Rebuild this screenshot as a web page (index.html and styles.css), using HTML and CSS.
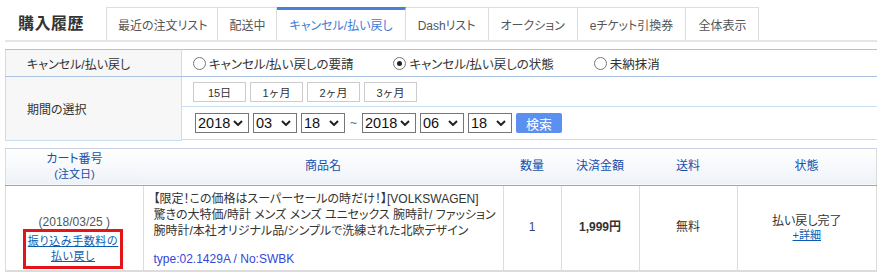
FILE: index.html
```html
<!DOCTYPE html>
<html>
<head>
	<meta charset="utf-8">
	<title>購入履歴</title>
	<link rel="stylesheet" href="styles.css">
</head>
<body>
	<div class="head">
		<h1 class="title">購入履歴</h1>
		<ul class="tabs">
			<li>最近の注文リスト</li>
			<li>配送中</li>
			<li class="active">キャンセル/払い戻し</li>
			<li>Dashリスト</li>
			<li>オークション</li>
			<li>eチケット引換券</li>
			<li>全体表示</li>
		</ul>
	</div>

	<table class="search">
		<tr>
			<th class="label">キャンセル/払い戻し</th>
			<td class="radios">
				<span class="radio"><i></i>キャンセル/払い戻しの要請</span>
				<span class="radio on"><i></i>キャンセル/払い戻しの状態</span>
				<span class="radio"><i></i>未納抹消</span>
			</td>
		</tr>
		<tr>
			<th class="label" rowspan="2">期間の選択</th>
			<td class="periods">
				<button class="btn">15日</button>
				<button class="btn">1ヶ月</button>
				<button class="btn">2ヶ月</button>
				<button class="btn">3ヶ月</button>
			</td>
		</tr>
		<tr>
			<td class="dates">
				<span class="sel y"><select><option>2018</option></select><svg viewBox="0 0 10 6"><path d="M1 1l4 4 4-4"/></svg></span>
				<span class="sel"><select><option>03</option></select><svg viewBox="0 0 10 6"><path d="M1 1l4 4 4-4"/></svg></span>
				<span class="sel"><select><option>18</option></select><svg viewBox="0 0 10 6"><path d="M1 1l4 4 4-4"/></svg></span>
				<span class="tilde">~</span>
				<span class="sel y"><select><option>2018</option></select><svg viewBox="0 0 10 6"><path d="M1 1l4 4 4-4"/></svg></span>
				<span class="sel"><select><option>06</option></select><svg viewBox="0 0 10 6"><path d="M1 1l4 4 4-4"/></svg></span>
				<span class="sel"><select><option>18</option></select><svg viewBox="0 0 10 6"><path d="M1 1l4 4 4-4"/></svg></span>
				<button class="go">検索</button>
			</td>
		</tr>
	</table>

	<table class="list">
		<thead>
			<tr>
				<th class="c1">カート番号<br><small>(注文日)</small></th>
				<th class="c2">商品名</th>
				<th class="c3">数量</th>
				<th class="c4">決済金額</th>
				<th class="c5">送料</th>
				<th class="c6">状態</th>
			</tr>
		</thead>
		<tbody>
			<tr>
				<td class="c1">
					<div class="date">(2018/03/25 )</div>
					<div class="mark"><a href="#">振り込み手数料の<br>払い戻し</a></div>
				</td>
				<td class="c2 goods">
					<p>【限定！この価格はスーパーセールの時だけ！】[VOLKSWAGEN]<br>驚きの大特価/時計 メンズ メンズ ユニセックス 腕時計/ ファッション<br>腕時計/本社オリジナル品/シンプルで洗練された北欧デザイン</p>
					<p class="opt">type:02.1429A / No:SWBK</p>
				</td>
				<td class="c3 qty">1</td>
				<td class="c4 price">1,999円</td>
				<td class="c5">無料</td>
				<td class="c6 state">払い戻し完了<br><a href="#" class="more">+詳細</a></td>
			</tr>
		</tbody>
	</table>
</body>
</html>
```

FILE: styles.css
```css
body{
	margin: 0;
	padding: 0 5px;
	font-family: "Liberation Sans", "Noto Sans CJK JP", sans-serif;
	font-size: 12px;
	color: #333;
	font-feature-settings: "palt";
	width: 872px;
}
.head{
	display: flex;
	align-items: flex-end;
	margin-top: 7px;
	border-bottom: 2px solid #e5e5e5;
}
.title{
	margin: 0;
	width: 101px;
	padding-left: 13px;
	box-sizing: border-box;
	font-size: 16px;
	font-weight: bold;
	color: #333;
	line-height: 33px;
	letter-spacing: 0.5px;
}
.tabs{
	display: flex;
	margin: 0;
	padding: 0;
	list-style: none;
}
.tabs li{
	height: 32px;
	line-height: 36px;
	padding: 0 12px;
	border: 1px solid #dedede;
	border-bottom: none;
	border-left: none;
	font-size: 12px;
	color: #555;
	background: #fff;
}
.tabs li:first-child{
	border-left: 1px solid #dedede;
	padding: 0 10px 0 11px;
}
.tabs li:nth-child(2){
	padding: 0 11px;
}
.tabs li.active{
	color: #3f7ad6;
	border-top: 3px solid #4a80d8;
	height: 30px;
	line-height: 32px;
}

.search{
	width: 100%;
	margin-top: 7px;
	border-collapse: collapse;
	border-top: 1px solid #a9c3e2;
	border-left: 1px solid #c8dcf2;
}
.search th,
.search td{
	padding: 0;
}
.search .label{
	width: 176px;
	box-sizing: border-box;
	padding-left: 21px;
	text-align: left;
	font-weight: normal;
	background: #f7f7f7;
	border-right: 1px solid #c8dcf2;
	border-bottom: 1px solid #c8dcf2;
}
.search tr:first-child .label,
.search .radios{
	height: 26px;
	border-bottom: 1px solid #a9c3e2;
}
.radios{
	padding-left: 11px !important;
}
.radio{
	display: inline-flex;
	align-items: center;
	width: 197px;
	font-size: 12.5px;
}
.radio i{
	width: 11px;
	height: 11px;
	border: 1px solid #777;
	border-radius: 50%;
	margin-right: 3px;
	position: relative;
	background: #fff;
}
.radio.on i::after{
	content: "";
	position: absolute;
	left: 3px;
	top: 3px;
	width: 5px;
	height: 5px;
	border-radius: 50%;
	background: #222;
}
.periods{
	height: 29px;
	padding-left: 11px !important;
	border-bottom: 1px solid #c8dcf2;
	display: flex;
	align-items: center;
	gap: 4px;
}
.btn{
	width: 53px;
	height: 20px;
	padding: 0;
	border: 1px solid #ccc;
	background: #fff;
	font-family: inherit;
	font-size: 11px;
	color: #333;
}
.dates{
	height: 32px;
	padding-left: 13px !important;
	border-bottom: 1px solid #c8dcf2;
	display: flex;
	align-items: center;
	gap: 4px;
}
.sel{
	position: relative;
	display: inline-block;
	width: 44px;
	height: 20px;
}
.sel.y{
	width: 54px;
}
.sel select{
	appearance: none;
	-webkit-appearance: none;
	width: 100%;
	height: 20px;
	box-sizing: border-box;
	padding: 0 0 0 2px;
	border: 1px solid #767676;
	border-radius: 0;
	background: #fff;
	font-family: "Liberation Sans", sans-serif;
	font-size: 14.5px;
	line-height: 18px;
	color: #111;
}
.sel svg{
	position: absolute;
	right: 6px;
	top: 7px;
	width: 10px;
	height: 6px;
	pointer-events: none;
}
.sel svg path{
	fill: none;
	stroke: #222;
	stroke-width: 2;
}
.tilde{
	width: 9px;
	text-align: center;
	color: #666;
}
.go{
	width: 46px;
	height: 20px;
	border: none;
	border-radius: 2px;
	background: #5b8ff0;
	color: #fff;
	font-family: inherit;
	font-size: 13px;
	padding: 0;
}

.list{
	width: 100%;
	margin-top: 7px;
	border-collapse: collapse;
	border-left: 1px solid #dcdcdc;
	border-right: 1px solid #dcdcdc;
}
.list th{
	height: 36px;
	padding: 0;
	font-weight: normal;
	color: #1550aa;
	font-size: 12px;
	line-height: 15px;
	background: linear-gradient(#ffffff, #eef2f8);
	border-top: 1px solid #c9d3e3;
	border-bottom: 1px solid #85a9e0;
}
.list th small{
	font-size: 11px;
}
.list td{
	box-sizing: border-box;
	height: 86px;
	padding: 0;
	text-align: center;
	vertical-align: middle;
	border-right: 1px solid #dcdcdc;
	border-bottom: 2px solid #dcdcdc;
	line-height: 15px;
}
.list .c1{ width: 137px; }
.list .c2{ width: 360px; }
.list .c3{ width: 58px; }
.list .c4{ width: 78px; }
.list .c5{ width: 98px; }
.list td.c1{
	padding-top: 29px;
	vertical-align: top;
}
.date{
	color: #555;
	line-height: 14px;
}
.mark{
	width: 94px;
	margin: 0 auto 0 17px;
	border: 3px solid #e5141b;
	padding: 2px 0;
}
.mark a{
	color: #0b5bb0;
	font-size: 11px;
	letter-spacing: 0.6px;
	line-height: 14px;
}
.goods{
	text-align: left !important;
	vertical-align: top !important;
	padding: 5px 0 0 10px !important;
}
.goods p{
	margin: 0;
	line-height: 16px;
}
.goods .opt{
	margin-top: 12px;
	color: #3546d8;
}
.qty{
	color: #3a3f80;
}
.price{
	font-weight: bold;
}
.state{
	line-height: 14px !important;
}
.more{
	color: #0b5bb0;
	font-size: 11px;
}
```
